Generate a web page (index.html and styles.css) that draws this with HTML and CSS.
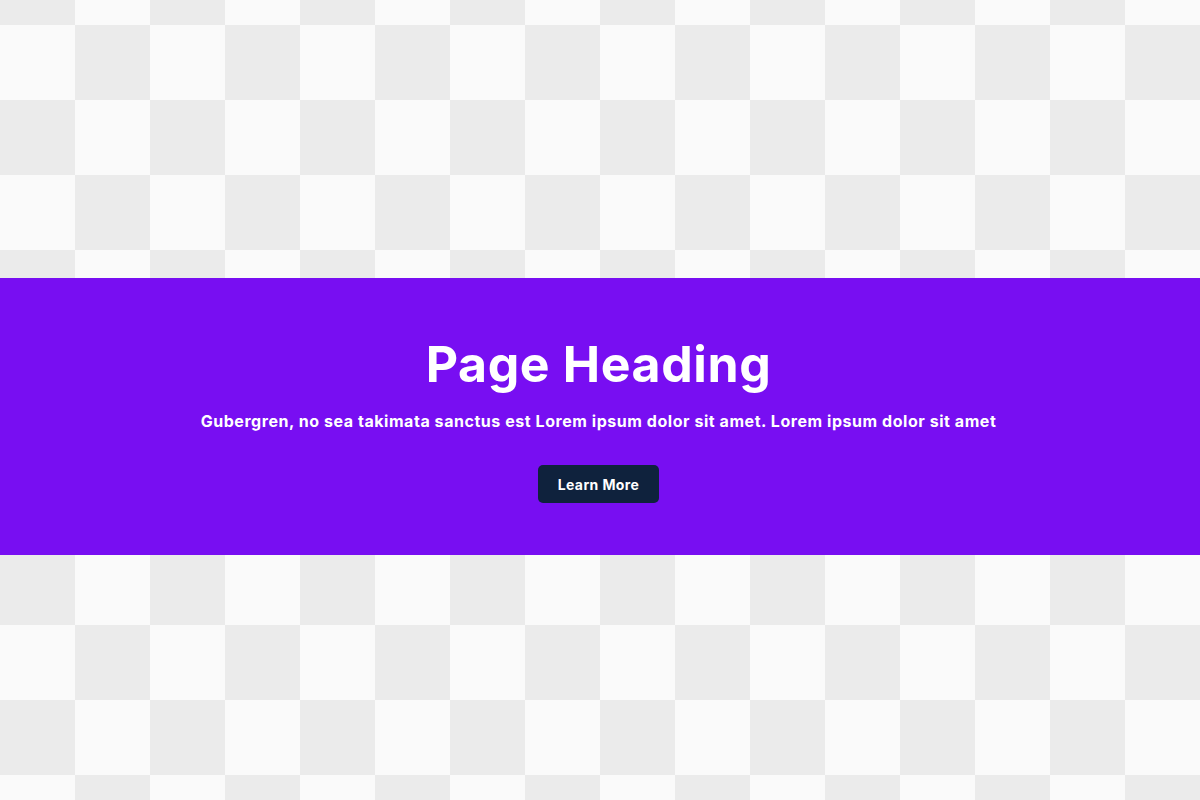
FILE: index.html
```html
<!DOCTYPE html>
<html lang="en">
<head>
<meta charset="utf-8">
<title>Page Heading</title>
<link rel="stylesheet" href="styles.css">
</head>
<body>
<div class="page">
  <section class="hero">
    <h1 class="hero-title">Page Heading</h1>
    <p class="hero-text">Gubergren, no sea takimata sanctus est Lorem ipsum dolor sit amet. Lorem ipsum dolor sit amet</p>
    <a class="hero-button" href="#">Learn More</a>
  </section>
</div>
</body>
</html>
```

FILE: styles.css
```css
html, body {
  margin: 0;
  padding: 0;
}
body {
  width: 1200px;
  height: 800px;
  overflow: hidden;
  font-family: Inter, "Noto Sans", sans-serif;
  background-color: #fafafa;
  background-image:
    linear-gradient(45deg, #ebebeb 25%, transparent 25%, transparent 75%, #ebebeb 75%),
    linear-gradient(45deg, #ebebeb 25%, transparent 25%, transparent 75%, #ebebeb 75%);
  background-size: 150px 150px;
  background-position: 75px -50px, 0 25px;
}
.page {
  display: flex;
  flex-direction: column;
  padding-top: 278px;
}
.hero {
  height: 277px;
  box-sizing: border-box;
  background: #780ef2;
  color: #fff;
  display: flex;
  flex-direction: column;
  align-items: center;
  padding: 55px 3px 0 0;
}
.hero-title {
  margin: 0;
  font-size: 50px;
  font-weight: 700;
  line-height: 62px;
  letter-spacing: 0.6px;
}
.hero-text {
  margin: 15px 0 0;
  font-size: 16px;
  font-weight: 700;
  line-height: 22px;
  letter-spacing: 0.55px;
}
.hero-button {
  margin-top: 33px;
  width: 121px;
  height: 38px;
  box-sizing: border-box;
  display: flex;
  align-items: center;
  justify-content: center;
  background: #0f223d;
  color: #fff;
  border-radius: 5px;
  font-size: 14px;
  font-weight: 700;
  letter-spacing: 0.4px;
  text-decoration: none;
}
```
